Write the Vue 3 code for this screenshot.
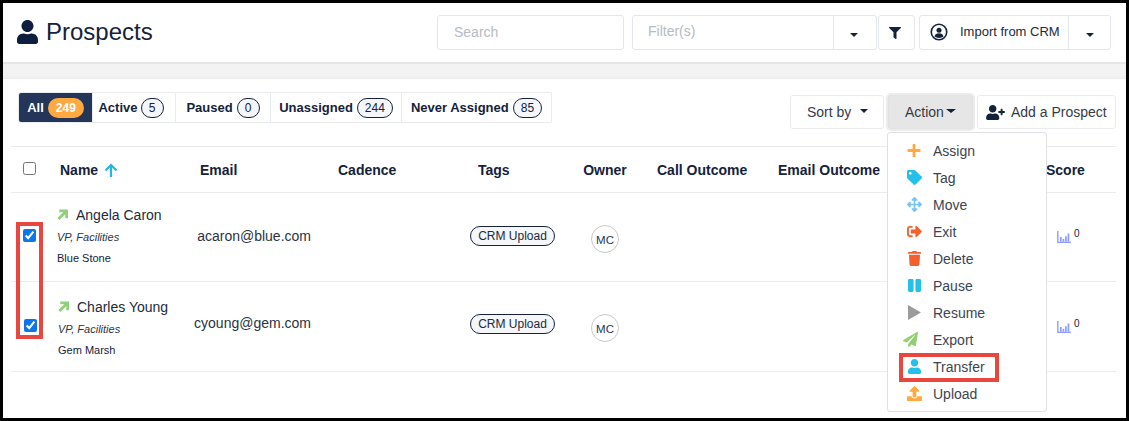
<script setup>
const USER = 'M224 256c70.7 0 128-57.3 128-128S294.7 0 224 0 96 57.3 96 128s57.3 128 128 128zm89.6 32h-16.7c-22.2 10.2-46.9 16-72.9 16s-50.6-5.8-72.9-16h-16.7C60.2 288 0 348.2 0 422.4V464c0 26.5 21.5 48 48 48h352c26.5 0 48-21.5 48-48v-41.6c0-74.2-60.2-134.4-134.4-134.4z'
const FILTER = 'M487.976 0H24.028C2.71 0-8.047 25.866 7.058 40.971L192 225.941V432c0 7.831 3.821 15.17 10.237 19.662l80 55.98C298.02 518.69 320 507.493 320 487.98V225.941l184.947-184.97C520.021 25.896 509.338 0 487.976 0z'
const USER_PLUS = 'M624 208h-64v-64c0-8.8-7.2-16-16-16h-32c-8.8 0-16 7.2-16 16v64h-64c-8.8 0-16 7.2-16 16v32c0 8.8 7.2 16 16 16h64v64c0 8.8 7.2 16 16 16h32c8.8 0 16-7.2 16-16v-64h64c8.8 0 16-7.2 16-16v-32c0-8.8-7.2-16-16-16zm-400 48c70.7 0 128-57.3 128-128S294.7 0 224 0 96 57.3 96 128s57.3 128 128 128zm89.6 32h-16.7c-22.2 10.2-46.9 16-72.9 16s-50.6-5.8-72.9-16h-16.7C60.2 288 0 348.2 0 422.4V464c0 26.5 21.5 48 48 48h352c26.5 0 48-21.5 48-48v-41.6c0-74.2-60.2-134.4-134.4-134.4z'

const tabs = [
  { label: 'All', count: 249, w: 74, active: true },
  { label: 'Active', count: 5, w: 83, cls: 'nudge' },
  { label: 'Paused', count: 0, w: 95 },
  { label: 'Unassigned', count: 244, w: 131 },
  { label: 'Never Assigned', count: 85, w: 149 }
]

const menu = [
  { label: 'Assign', color: '#ffa940', box: '0 0 448 512', w: 14, d: 'M416 208H272V64c0-17.67-14.33-32-32-32h-32c-17.67 0-32 14.33-32 32v144H32c-17.67 0-32 14.33-32 32v32c0 17.67 14.33 32 32 32h144v144c0 17.67 14.33 32 32 32h32c17.67 0 32-14.33 32-32V304h144c17.67 0 32-14.33 32-32v-32c0-17.67-14.33-32-32-32z' },
  { label: 'Tag', color: '#23c0e8', box: '0 0 512 512', w: 15, d: 'M0 252.118V48C0 21.49 21.49 0 48 0h204.118a48 48 0 0 1 33.941 14.059l211.882 211.882c18.745 18.745 18.745 49.137 0 67.882L293.823 497.941c-18.745 18.745-49.137 18.745-67.882 0L14.059 286.059A48 48 0 0 1 0 252.118zM112 64c-26.51 0-48 21.49-48 48s21.49 48 48 48 48-21.49 48-48-21.49-48-48-48z' },
  { label: 'Move', color: '#74c3ff', box: '0 0 512 512', w: 15, d: 'M352.201 425.775l-79.196 79.196c-9.373 9.373-24.568 9.373-33.941 0l-79.196-79.196c-15.119-15.119-4.411-40.971 16.971-40.97h51.162L228 284H127.196v51.162c0 21.382-25.851 32.09-40.971 16.971L7.029 272.937c-9.373-9.373-9.373-24.569 0-33.941L86.225 159.8c15.119-15.119 40.971-4.411 40.971 16.971V228H228V127.196h-51.23c-21.382 0-32.09-25.851-16.971-40.971l79.196-79.196c9.373-9.373 24.568-9.373 33.941 0l79.196 79.196c15.119 15.119 4.411 40.971-16.971 40.971h-51.162V228h100.804v-51.162c0-21.382 25.851-32.09 40.97-16.971l79.196 79.196c9.373 9.373 9.373 24.569 0 33.941L425.773 352.2c-15.119 15.119-40.971 4.411-40.97-16.971V284H284v100.804h51.23c21.382 0 32.09 25.851 16.971 40.971z' },
  { label: 'Exit', color: '#f4602d', box: '0 0 512 512', w: 15, d: 'M497 273L329 441c-15 15-41 4.5-41-17v-96H152c-13.3 0-24-10.7-24-24v-96c0-13.3 10.7-24 24-24h136V88c0-21.4 25.9-32 41-17l168 168c9.3 9.4 9.3 24.6 0 34zM192 436v-40c0-6.6-5.4-12-12-12H96c-17.7 0-32-14.3-32-32V160c0-17.7 14.3-32 32-32h84c6.6 0 12-5.4 12-12V76c0-6.6-5.4-12-12-12H96c-53 0-96 43-96 96v192c0 53 43 96 96 96h84c6.6 0 12-5.4 12-12z' },
  { label: 'Delete', color: '#f4602d', box: '0 0 448 512', w: 13, shift: 1, d: 'M432 32H312l-9.4-18.7A24 24 0 0 0 281.1 0H166.8a23.72 23.72 0 0 0-21.4 13.3L136 32H16A16 16 0 0 0 0 48v32a16 16 0 0 0 16 16h416a16 16 0 0 0 16-16V48a16 16 0 0 0-16-16zM53.2 467a48 48 0 0 0 47.9 45h245.8a48 48 0 0 0 47.9-45L416 128H32z' },
  { label: 'Pause', color: '#23c0e8', box: '0 0 448 512', w: 13, shift: 1, d: 'M144 479H48c-26.5 0-48-21.5-48-48V79c0-26.5 21.5-48 48-48h96c26.500 0 48 21.5 48 48v352c0 26.5-21.500 48-48 48zm304-48V79c0-26.5-21.5-48-48-48h-96c-26.500 0-48 21.5-48 48v352c0 26.500 21.500 48 48 48h96c26.500 0 48-21.500 48-48z' },
  { label: 'Resume', color: '#9b9b9b', box: '0 0 448 512', w: 13, shift: 1, d: 'M0 0L448 256 0 512z' },
  { label: 'Export', color: '#92ce72', box: '0 0 512 512', w: 15, shift: -4, d: 'M476 3.2L12.5 270.6c-18.1 10.4-15.800 35.600 2.200 43.200L121 358.400l287.300-253.200c5.500-4.900 13.300 2.600 8.600 8.300L176 407v80.500c0 23.600 28.500 32.900 42.500 15.800L282 426l124.600 52.200c14.200 6 30.400-2.900 33-18.200l72-432C515 7.800 493.300-6.800 476 3.200z' },
  { label: 'Transfer', color: '#23c0e8', box: '0 0 448 512', w: 13, shift: 1, d: USER },
  { label: 'Upload', color: '#ffa940', box: '0 0 512 512', w: 15, d: 'M296 384h-80c-13.300 0-24-10.700-24-24V192h-87.700c-17.800 0-26.700-21.500-14.100-34.100L242.300 5.700c7.500-7.500 19.800-7.500 27.300 0l152.200 152.200c12.600 12.600 3.700 34.100-14.100 34.100H320v168c0 13.300-10.700 24-24 24zm216-8v112c0 13.300-10.700 24-24 24H24c-13.300 0-24-10.700-24-24V376c0-13.300 10.700-24 24-24h136v8c0 30.900 25.100 56 56 56h80c30.900 0 56-25.100 56-56v-8h136c13.300 0 24 10.700 24 24z' }
]

const rows = [
  { name: 'Angela Caron', email: 'acaron@blue.com', company: 'Blue Stone', cls: 'first' },
  { name: 'Charles Young', email: 'cyoung@gem.com', company: 'Gem Marsh', cls: 'second' }
]
</script>

<template>
  <div class="frame">
    <header class="top">
      <div class="title">
        <svg class="title-icon" viewBox="0 0 448 512"><path :d="USER" /></svg>
        <h1>Prospects</h1>
      </div>
      <div class="top-tools">
        <input class="search" placeholder="Search" />
        <div class="group filter">
          <span class="filter-text">Filter(s)</span>
          <span class="caret-cell"><i class="caret"></i></span>
        </div>
        <div class="group funnel">
          <svg viewBox="0 0 512 512"><path :d="FILTER" /></svg>
        </div>
        <div class="group import">
          <span class="import-main">
            <svg class="circle-user" viewBox="0 0 20 20">
              <circle cx="10" cy="10" r="8.600" fill="none" stroke="#15223b" stroke-width="1.800" />
              <circle cx="10" cy="8" r="2.800" fill="#15223b" />
              <path d="M5 15c.5-2.500 2.500-3.500 5-3.500s4.500 1 5 3.500c-1.300 1-3 1.600-5 1.600S6.300 16 5 15z" fill="#15223b" />
            </svg>
            Import from CRM
          </span>
          <span class="caret-cell narrow"><i class="caret"></i></span>
        </div>
      </div>
    </header>
    <div class="band"></div>

    <main class="panel">
      <div class="toolbar">
        <nav class="tabs">
          <button
            v-for="t in tabs"
            :key="t.label"
            class="tab"
            :class="[{ active: t.active }, t.cls]"
            :style="{ width: t.w + 'px' }"
          >
            {{ t.label }}<span class="count">{{ t.count }}</span>
          </button>
        </nav>
        <div class="actions">
          <button class="btn sort">Sort by <i class="caret small"></i></button>
          <button class="btn action">Action<i class="caret tight"></i></button>
          <button class="btn add">
            <svg viewBox="0 0 640 512"><path :d="USER_PLUS" /></svg>
            Add a Prospect
          </button>
        </div>
      </div>

      <section class="table">
        <div class="row head">
          <span class="c-check"><input type="checkbox" class="check" /></span>
          <span class="h-name">Name
            <svg class="sort-arrow" viewBox="0 0 14 14"><path d="M7 14V2M1.500 7.500 7 2l5.500 5.500" fill="none" stroke="#23b5e8" stroke-width="2.200" /></svg>
          </span>
          <span class="h-email">Email</span>
          <span class="h-cadence">Cadence</span>
          <span class="h-tags">Tags</span>
          <span class="h-owner">Owner</span>
          <span class="h-call">Call Outcome</span>
          <span class="h-outcome">Email Outcome</span>
          <span class="h-score">Score</span>
        </div>
        <div v-for="r in rows" :key="r.email" class="row body" :class="r.cls">
          <span class="c-check"><input type="checkbox" class="check" checked /></span>
          <div class="person">
            <div class="person-name">
              <svg class="trend" viewBox="0 0 12 12"><path d="M1.500 11 9 3.500M2.500 2h8v8" fill="none" stroke="#8fd07a" stroke-width="3" /></svg>
              {{ r.name }}
            </div>
            <div class="person-title">VP, Facilities</div>
            <div class="person-company">{{ r.company }}</div>
          </div>
          <div class="email">{{ r.email }}</div>
          <div></div>
          <div class="tag-cell"><span class="chip">CRM Upload</span></div>
          <div class="owner-cell"><span class="avatar">MC</span></div>
          <div></div>
          <div></div>
          <div class="score">
            <svg viewBox="0 0 16 14">
              <path d="M.8 0v13.200H16" fill="none" stroke="#8c9cff" stroke-width="1.600" />
              <path d="M3.300 7h2v5.500h-2zM6.300 9h2v3.500h-2zM9.200 6h2v6.500h-2zM12.200 3h2v9.500h-2z" fill="#8c9cff" />
            </svg>
            <span>0</span>
          </div>
        </div>
      </section>

      <div class="menu">
        <a v-for="m in menu" :key="m.label" class="menu-item">
          <span class="menu-icon">
            <svg
              :viewBox="m.box"
              :style="{ width: m.w + 'px', fill: m.color, marginLeft: (m.shift || 0) + 'px' }"
            ><path :d="m.d" /></svg>
          </span>
          {{ m.label }}
        </a>
      </div>

      <div class="mark mark-checks"></div>
      <div class="mark mark-transfer"></div>
    </main>
  </div>
</template>

<style>
html, body { margin: 0; background: #fff; }
</style>

<style scoped>
* { box-sizing: border-box; }
.frame {
  width: 1129px;
  height: 421px;
  border: 3px solid #000;
  font-family: "Liberation Sans", Arial, sans-serif;
  color: #15223b;
  background: #fff;
  display: flex;
  flex-direction: column;
  overflow: hidden;
}
.top {
  height: 61px;
  flex: none;
  border-bottom: 2px solid #e6e6e6;
  display: flex;
  padding: 12px 15px 0 14px;
  justify-content: space-between;
}
.title { display: flex; align-items: flex-start; gap: 8px; padding-top: 2px; }
.title-icon { width: 21px; height: 24px; fill: #0e1e3f; margin-top: 3px; }
h1 { margin: 0; font-weight: 400; font-size: 24px; line-height: 30px; color: #15223b; }
.top-tools { display: flex; align-items: flex-start; height: 35px; }
.search, .group {
  height: 35px;
  border: 1px solid #e3e6ea;
  border-radius: 3px;
  background: #fff;
}
.search {
  width: 187px;
  padding: 0 16px 2px;
  font: 14px "Liberation Sans", Arial, sans-serif;
  margin-right: 8px;
  outline: none;
}
.search::placeholder { color: #b6bbc2; opacity: 1; }
.group { display: flex; align-items: stretch; }
.filter { width: 245px; margin-right: 1px; }
.filter-text { flex: 1; font-size: 14px; line-height: 31px; padding-left: 15px; color: #b6bbc2; border-right: 1px solid #e3e6ea; }
.caret-cell { width: 42px; display: flex; align-items: center; justify-content: center; padding: 4px 2px 0 0; }
.caret-cell.narrow { width: 41px; padding-right: 0; }
.caret {
  display: inline-block;
  width: 0;
  height: 0;
  border-left: 4px solid transparent;
  border-right: 4px solid transparent;
  border-top: 4px solid #15223b;
}
.funnel { width: 37px; margin-right: 4px; align-items: center; justify-content: center; padding-right: 3px; }
.funnel svg { width: 12px; height: 12px; fill: #15223b; }
.import { width: 192px; }
.import-main {
  flex: 1;
  display: flex;
  align-items: center;
  gap: 12px;
  padding: 0 0 2px 10px;
  font-size: 13px;
  border-right: 1px solid #e3e6ea;
  color: #222b3a;
  white-space: nowrap;
}
.circle-user { width: 18px; height: 18px; flex: none; margin-top: 1px; }
.band {
  height: 15px;
  flex: none;
  background: #f3f3f3;
  box-shadow: inset 0 -2px 2px -1px #e9e9e9;
}
.panel { position: relative; flex: 1; padding: 0 10px 0 8px; }
.toolbar {
  height: 67px;
  display: flex;
  justify-content: space-between;
  align-items: flex-start;
  padding: 13px 0 0 7px;
}
.tabs { display: flex; height: 31px; border: 1px solid #e9ebee; border-radius: 2px; }
.tab {
  border: 0;
  border-right: 1px solid #e9ebee;
  background: #fff;
  padding: 0;
  font: 700 13px "Liberation Sans", Arial, sans-serif;
  color: #15223b;
  display: flex;
  align-items: center;
  justify-content: center;
  gap: 4px;
  white-space: nowrap;
}
.tab.nudge { padding-right: 6px; gap: 3px; }
.tab:last-child { border-right: 0; }
.tab.active { background: #233659; color: #fff; border-radius: 2px 0 0 2px; }
.count {
  min-width: 23px;
  height: 20px;
  padding: 0 7px;
  border: 1px solid #15223b;
  border-radius: 10px;
  background: #f4f6f9;
  color: #15223b;
  font-size: 12px;
  font-weight: 400;
  line-height: 18px;
  text-align: center;
}
.tab .count { font-weight: 400; }
.tab.active .count { background: #ffa940; border: 0; color: #fff; line-height: 20px; font-weight: 700; width: 36px; }
.actions { display: flex; gap: 4px; padding-top: 3px; }
.btn {
  height: 34px;
  border: 1px solid #e9ebee;
  border-radius: 3px;
  background: #fff;
  font: 14px "Liberation Sans", Arial, sans-serif;
  color: #333b49;
  display: flex;
  align-items: center;
  padding: 0;
  white-space: nowrap;
}
.sort { width: 94px; padding-left: 16px; }
.sort .caret { margin-left: 9px; margin-bottom: 2px; }
.action {
  width: 85px;
  padding-left: 16px;
  background: #e6e6e6;
  border-color: #e2e2e2;
  box-shadow: 0 0 0 2px #ececec;
}
.caret.tight { margin-left: 2px; margin-bottom: 2px; border-left-width: 5px; border-right-width: 5px; }
.add { width: 139px; padding-left: 8px; gap: 6px; }
.add svg { width: 19px; height: 15px; fill: #15223b; }
.table { border-top: 1px solid #ececec; margin-top: 0; }
.row {
  display: grid;
  grid-template-columns: 46px 133px 125px 140px 115px 70px 121px 268px 1fr;
  border-bottom: 1px solid #ececec;
}
.head { height: 46px; align-items: center; font-size: 14px; font-weight: 700; color: #15223b; }
.head span { white-space: nowrap; }
.c-check { padding-left: 12px; display: flex; }
.head .c-check { margin-top: -2px; }
.check { width: 13px; height: 13px; margin: 0; accent-color: #0b76ee; }
.h-name { padding-left: 3px; }
.sort-arrow { width: 14px; height: 14px; margin-left: 2px; vertical-align: -2px; }
.h-email { padding-left: 10px; }
.h-cadence { padding-left: 23px; }
.h-tags { padding-left: 23px; }
.h-owner { text-align: center; }
.h-call { padding-left: 17px; }
.h-outcome { padding-left: 17px; }
.h-score { padding-left: 17px; }
.body { height: 89px; }
.body.second { height: 90px; }
.body .c-check { padding-top: 36px; }
.second .c-check { padding-top: 37px; padding-left: 13px; }
.person { padding-top: 14px; }
.second .person { padding-left: 1px; padding-top: 17px; }
.person-name { display: flex; align-items: center; gap: 8px; font-size: 14px; line-height: 17px; color: #222b3a; white-space: nowrap; }
.trend { width: 11px; height: 11px; margin-top: -3px; }
.person-title { font-size: 11px; font-style: italic; line-height: 14px; margin-top: 6px; color: #2a3344; }
.person-company { font-size: 11px; line-height: 14px; margin-top: 7px; color: #15223b; }
.email { font-size: 14px; color: #2a3344; text-align: right; padding: 35px 4px 0 0; }
.second .email { padding-top: 33px; }
.tag-cell { padding: 33px 0 0 15px; }
.second .tag-cell { padding-top: 32px; }
.chip {
  display: inline-block;
  height: 20px;
  width: 85px;
  border: 1px solid #15223b;
  border-radius: 10px;
  background: #f4f6f9;
  font-size: 12px;
  line-height: 18px;
  text-align: center;
  color: #222b3a;
}
.owner-cell { padding: 32px 0 0 21px; }
.avatar {
  display: block;
  width: 28px;
  height: 28px;
  border-radius: 50%;
  border: 1px solid #c9c9c9;
  font-size: 11.500px;
  line-height: 28px;
  text-align: center;
  color: #233659;
}
.score { display: flex; align-items: flex-start; gap: 3px; padding: 36px 0 0 28px; font-size: 10px; line-height: 10px; }
.second .score { padding-top: 37px; }
.score svg { width: 14px; height: 12px; margin-top: 2px; }
.menu {
  position: absolute;
  left: 884px;
  top: 53px;
  width: 160px;
  height: 280px;
  background: #fff;
  border: 1px solid #e0e0e0;
  border-radius: 3px;
  padding: 4px 0;
}
.menu-item {
  height: 27px;
  display: flex;
  align-items: center;
  font-size: 14px;
  color: #3c4452;
  padding-left: 19px;
}
.menu-icon { width: 26px; display: flex; align-items: center; flex: none; }
.menu-icon svg { height: 15px; display: block; }
.mark { position: absolute; border: 4px solid #e8463f; pointer-events: none; }
.mark-checks { left: 13px; top: 143px; width: 27px; height: 117px; }
.mark-transfer { left: 896px; top: 274px; width: 100px; height: 29px; }
</style>
